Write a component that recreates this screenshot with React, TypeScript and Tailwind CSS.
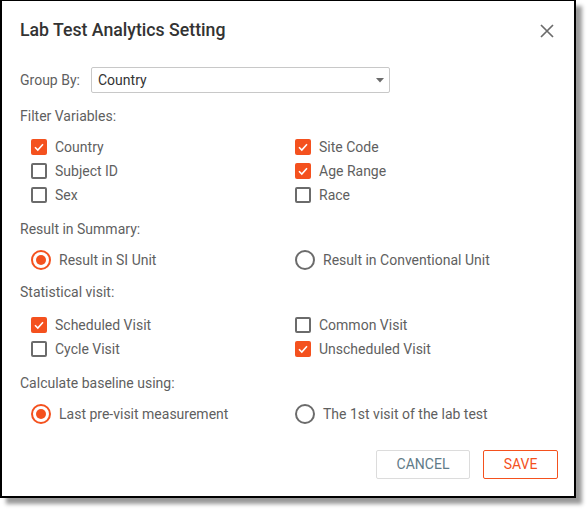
import React from "react";

function Check({ checked, label }: { checked: boolean; label: string }) {
  return (
    <div className="flex h-[24px] items-center gap-[8px]">
      {checked ? (
        <span className="flex h-[16px] w-[16px] items-center justify-center rounded-[2px] bg-[#f4511e]">
          <svg width="12" height="12" viewBox="0 0 12 12">
            <path d="M2 6.2 L4.8 9 L10 3.2" fill="none" stroke="#fff" strokeWidth="1.6" />
          </svg>
        </span>
      ) : (
        <span className="h-[16px] w-[16px] rounded-[2px] border-2 border-[#6b6b6b]" />
      )}
      <span className="text-[14px] text-[#5f5f5f]">{label}</span>
    </div>
  );
}

function Radio({ checked, label }: { checked: boolean; label: string }) {
  return (
    <div className="flex h-[24px] items-center gap-[8px]">
      {checked ? (
        <span className="flex h-[20px] w-[20px] items-center justify-center rounded-full border-2 border-[#f4511e]">
          <span className="h-[10px] w-[10px] rounded-full bg-[#f4511e]" />
        </span>
      ) : (
        <span className="h-[20px] w-[20px] rounded-full border-2 border-[#6b6b6b]" />
      )}
      <span className="text-[14px] text-[#5f5f5f]">{label}</span>
    </div>
  );
}

function Section({ children }: { children: React.ReactNode }) {
  return <div className="flex h-[20px] items-center text-[14px] text-[#5f5f5f]">{children}</div>;
}

export default function App() {
  return (
    <div className="h-[510px] w-[587px] bg-white" style={{ fontFamily: "Roboto, 'Liberation Sans', sans-serif" }}>
      <div className="flex h-[498px] w-[576px] flex-col border-b-2 border-l-2 border-r-2 border-t border-black bg-white pl-[18px] pr-[16px] shadow-[6px_6px_4px_rgba(0,0,0,0.4)]">
        <div className="flex h-[59px] items-center justify-between">
          <span className="text-[17.7px] font-medium text-[#333]">Lab Test Analytics Setting</span>
          <svg width="16" height="16" viewBox="0 0 16 16" className="mr-[3px]">
            <path d="M2 2 L14 14 M14 2 L2 14" stroke="#6b6b6b" strokeWidth="1.7" />
          </svg>
        </div>
        <div className="mt-[7px] flex h-[26px] items-center">
          <span className="w-[71px] text-[14px] text-[#5f5f5f]">Group By:</span>
          <div className="flex h-[26px] w-[299px] items-center justify-between rounded-[2px] border border-[#c8c8c8] pl-[6px] pr-[5px]">
            <span className="text-[14px] text-[#333]">Country</span>
            <svg width="8" height="5" viewBox="0 0 8 5">
              <path d="M0 0 L8 0 L4 4.5 Z" fill="#6b6b6b" />
            </svg>
          </div>
        </div>
        <div className="mt-[13px]">
          <Section>Filter Variables:</Section>
        </div>
        <div className="mt-[9px] grid grid-cols-[264px_1fr] pl-[11px]">
          <Check checked label="Country" />
          <Check checked label="Site Code" />
          <Check checked={false} label="Subject ID" />
          <Check checked label="Age Range" />
          <Check checked={false} label="Sex" />
          <Check checked={false} label="Race" />
        </div>
        <div className="mt-[12px]">
          <Section>Result in Summary:</Section>
        </div>
        <div className="mt-[9px] grid grid-cols-[264px_1fr] pl-[11px]">
          <Radio checked label="Result in SI Unit" />
          <Radio checked={false} label="Result in Conventional Unit" />
        </div>
        <div className="mt-[10px]">
          <Section>Statistical visit:</Section>
        </div>
        <div className="mt-[11px] grid grid-cols-[264px_1fr] pl-[11px]">
          <Check checked label="Scheduled Visit" />
          <Check checked={false} label="Common Visit" />
          <Check checked={false} label="Cycle Visit" />
          <Check checked label="Unscheduled Visit" />
        </div>
        <div className="mt-[12px]">
          <Section>Calculate baseline using:</Section>
        </div>
        <div className="mt-[9px] grid grid-cols-[264px_1fr] pl-[11px]">
          <Radio checked label="Last pre-visit measurement" />
          <Radio checked={false} label="The 1st visit of the lab test" />
        </div>
        <div className="mt-[24px] flex justify-end gap-[13px]">
          <button className="flex h-[29px] w-[94px] items-center justify-center rounded-[2px] border border-[#dcdcdc] text-[14px] text-[#5f7b88]">
            CANCEL
          </button>
          <button className="flex h-[29px] w-[75px] items-center justify-center rounded-[2px] border border-[#f4511e] text-[14px] text-[#f4511e]">
            SAVE
          </button>
        </div>
      </div>
    </div>
  );
}
